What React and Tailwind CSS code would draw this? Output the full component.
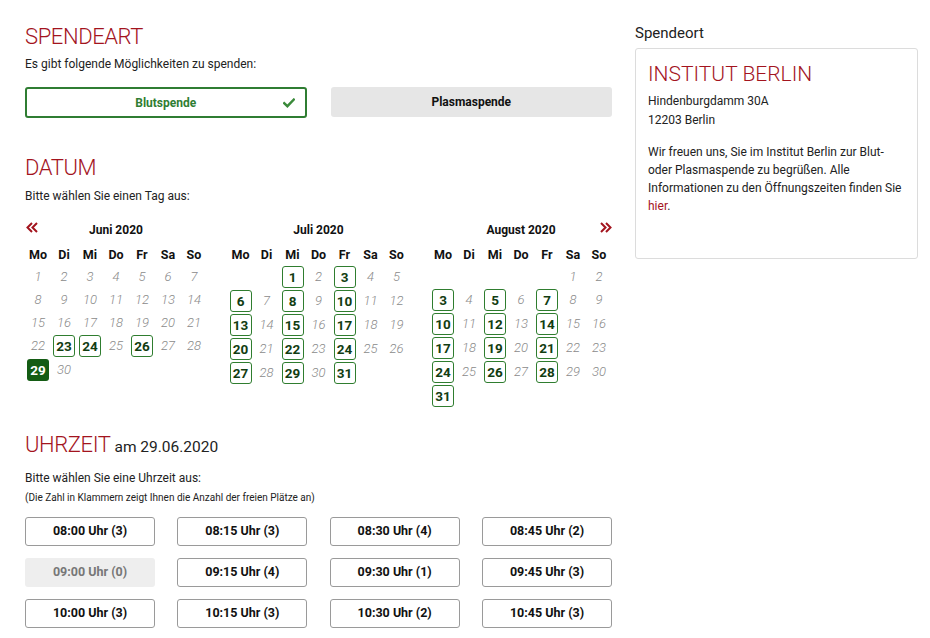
import React from "react";

const RED = "text-[#a3141e]";

function Check() {
  return (
    <svg width="12" height="10" viewBox="0 0 12 10">
      <path d="M1.2 5.2 L4.4 8.2 L10.8 1.6" fill="none" stroke="#3a8a3a" strokeWidth="2.4" strokeLinecap="square" />
    </svg>
  );
}

function Chevrons({ dir }) {
  const d = dir === "left"
    ? "M6 1 L1.5 5.5 L6 10 M11 1 L6.5 5.5 L11 10"
    : "M1 1 L5.5 5.5 L1 10 M6 1 L10.5 5.5 L6 10";
  return (
    <svg width="12" height="11" viewBox="0 0 12 11">
      <path d={d} fill="none" stroke="#a3141e" strokeWidth="2" />
    </svg>
  );
}

const WD = ["Mo", "Di", "Mi", "Do", "Fr", "Sa", "So"];

function Month({ title, offset, days, avail, selected, left, right }) {
  const cells = [];
  for (let i = 0; i < offset; i++) cells.push(null);
  for (let d = 1; d <= days; d++) cells.push(d);
  while (cells.length % 7) cells.push(null);
  const rows = [];
  for (let i = 0; i < cells.length; i += 7) rows.push(cells.slice(i, i + 7));
  return (
    <div className="w-[182px]">
      <div className="relative h-[20px] flex items-center justify-center text-[12px] font-bold text-[#111]">
        {left && <span className="absolute left-[1px] top-[2px]"><Chevrons dir="left" /></span>}
        {title}
        {right && <span className="absolute right-[0px] top-[2px]"><Chevrons dir="right" /></span>}
      </div>
      <div className="grid grid-cols-7 mt-[5px] h-[20px] items-center text-[12.5px] font-bold text-[#111]">
        {WD.map((w) => (
          <div key={w} className="text-center">{w}</div>
        ))}
      </div>
      <div>
        {rows.map((r, ri) => {
          const hasBox = r.some((d) => d && (avail.includes(d) || d === selected));
          return (
            <div key={ri} className={`grid grid-cols-7 items-center ${hasBox ? "h-[24px]" : "h-[23px]"}`}>
              {r.map((d, ci) => (
                <div key={ci} className="flex justify-center">
                  {d === null ? null : d === selected ? (
                    <div className="w-[22px] h-[22px] rounded-[3px] bg-[#145c14] text-white text-[13.5px] font-bold flex items-center justify-center">{d}</div>
                  ) : avail.includes(d) ? (
                    <div className="w-[22px] h-[22px] rounded-[3px] border border-[#2f7d2f] text-[#123d12] text-[13.5px] font-bold flex items-center justify-center">{d}</div>
                  ) : (
                    <div className="text-[13px] italic font-light text-[#8a8a8a]">{d}</div>
                  )}
                </div>
              ))}
            </div>
          );
        })}
      </div>
    </div>
  );
}

const TIMES = [
  ["08:00 Uhr (3)", "08:15 Uhr (3)", "08:30 Uhr (4)", "08:45 Uhr (2)"],
  ["09:00 Uhr (0)", "09:15 Uhr (4)", "09:30 Uhr (1)", "09:45 Uhr (3)"],
  ["10:00 Uhr (3)", "10:15 Uhr (3)", "10:30 Uhr (2)", "10:45 Uhr (3)"],
];

export default function App() {
  return (
    <div className="w-[930px] h-[638px] overflow-hidden bg-white text-[#222] font-['Roboto',sans-serif]">
      <div className="flex pl-[25px] pt-[22px] gap-[23px]">
        <div className="w-[587px]">
          <h1 className={`text-[22px] leading-[30px] font-light tracking-[-0.4px] ${RED}`}>SPENDEART</h1>
          <p className="text-[12px] leading-[18px] mt-[3px]">Es gibt folgende Möglichkeiten zu spenden:</p>
          <div className="flex gap-[24px] mt-[14px]">
            <div className="relative w-[282px] h-[31px] rounded-[3px] border-2 border-[#2f7d32] flex items-center justify-center text-[12px] font-bold text-[#2f7d32]">
              Blutspende
              <span className="absolute right-[10px] top-[9px]"><Check /></span>
            </div>
            <div className="w-[282px] h-[30px] rounded-[3px] bg-[#e6e6e6] flex items-center justify-center text-[12px] font-bold text-[#111]">
              Plasmaspende
            </div>
          </div>

          <h2 className={`mt-[35px] text-[22px] leading-[30px] font-light tracking-[-0.4px] ${RED}`}>DATUM</h2>
          <p className="text-[12px] leading-[18px] mt-[4px]">Bitte wählen Sie einen Tag aus:</p>
          <div className="flex justify-between mt-[15px]">
            <Month title="Juni 2020" offset={0} days={30} avail={[23, 24, 26]} selected={29} left />
            <Month title="Juli 2020" offset={2} days={31} avail={[1, 3, 6, 8, 10, 13, 15, 17, 20, 22, 24, 27, 29, 31]} />
            <Month title="August 2020" offset={5} days={31} avail={[3, 5, 7, 10, 12, 14, 17, 19, 21, 24, 26, 28, 31]} right />
          </div>

          <h2 className="mt-[22px] leading-[30px]">
            <span className={`text-[22px] font-light tracking-[-0.4px] ${RED}`}>UHRZEIT</span>
            <span className="text-[15.5px] text-[#222]"> am 29.06.2020</span>
          </h2>
          <p className="text-[12px] leading-[18px] mt-[7px]">Bitte wählen Sie eine Uhrzeit aus:</p>
          <p className="text-[10px] leading-[14px] mt-[4px]">(Die Zahl in Klammern zeigt Ihnen die Anzahl der freien Plätze an)</p>
          <div className="flex flex-col gap-[12px] mt-[12px]">
            {TIMES.map((row, i) => (
              <div key={i} className="flex justify-between">
                {row.map((t) =>
                  t.endsWith("(0)") ? (
                    <div key={t} className="w-[130px] h-[29px] rounded-[3px] bg-[#eeeeee] flex items-center justify-center text-[12.5px] font-bold text-[#777]">{t}</div>
                  ) : (
                    <div key={t} className="w-[130px] h-[29px] rounded-[3px] border border-[#9a9a9a] flex items-center justify-center text-[12.5px] font-bold text-[#111]">{t}</div>
                  )
                )}
              </div>
            ))}
          </div>
        </div>

        <div className="w-[283px]">
          <div className="text-[15px] leading-[20px] mt-[1px] text-[#222]">Spendeort</div>
          <div className="mt-[5px] h-[211px] border border-[#dcdcdc] rounded-[3px] px-[12px] pt-[12px]">
            <div className={`text-[21px] leading-[26px] font-light ${RED}`}>INSTITUT BERLIN</div>
            <div className="text-[12px] leading-[19px] mt-[5px]">
              Hindenburgdamm 30A<br />12203 Berlin
            </div>
            <p className="text-[12px] leading-[18px] mt-[13px]">
              Wir freuen uns, Sie im Institut Berlin zur Blut-<br />oder Plasmaspende zu begrüßen. Alle Informationen zu den Öffnungszeiten finden Sie <span className="text-[#a3141e]">hier</span>.
            </p>
          </div>
        </div>
      </div>
    </div>
  );
}
